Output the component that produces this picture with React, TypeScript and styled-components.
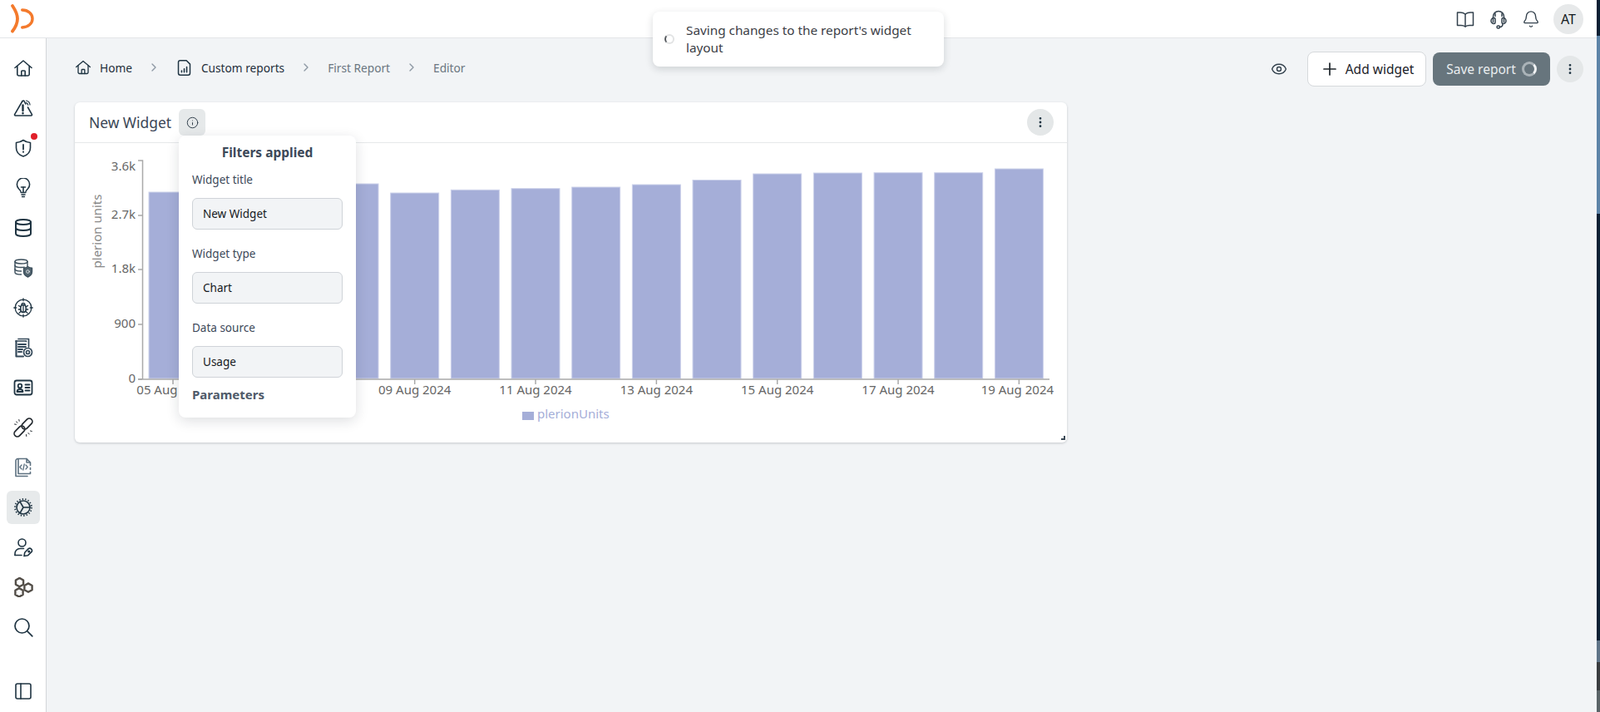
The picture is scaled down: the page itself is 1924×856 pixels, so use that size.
import { FC, ReactNode } from "react";
import styled, { createGlobalStyle } from "styled-components";
import {
  Bell,
  ChevronRight,
  Database,
  EllipsisVertical,
  Eye,
  Info,
  PanelLeft,
  Plus,
} from "lucide-react";

const GlobalStyle = createGlobalStyle`
  html, body {
    margin: 0;
    padding: 0;
    background: #f2f4f6;
    font-family: "Noto Sans", "Open Sans", sans-serif;
  }
  * { box-sizing: border-box; }
`;

const Svg: FC<{ children: ReactNode; color?: string; width?: number; size?: number }> = ({
  children,
  color = "#1f3442",
  width = 1.6,
  size = 24,
}) => (
  <svg
    width={size}
    height={size}
    viewBox="0 0 24 24"
    fill="none"
    stroke={color}
    strokeWidth={width}
    strokeLinecap="round"
    strokeLinejoin="round"
  >
    {children}
  </svg>
);

const HomeIcon: FC<{ size?: number }> = ({ size }) => (
  <Svg size={size}>
    <path d="M2 11.5 12 3l10 8.5" />
    <path d="M4.8 9.5v9.7a1.8 1.8 0 0 0 1.8 1.8h10.8a1.8 1.8 0 0 0 1.8-1.8V9.5" />
    <path d="M9.8 21v-5.2a.8.8 0 0 1 .8-.8h2.8a.8.8 0 0 1 .8.8V21" />
  </Svg>
);

const WarningIcon = () => (
  <Svg>
    <path d="M11 3.5 1.6 19.6A1 1 0 0 0 2.5 21h19a1 1 0 0 0 .9-1.4L17.5 11" />
    <path d="M11 3.5 12.8 3l2 4" />
    <path d="M11.5 8.5v6.5" strokeWidth={2.4} />
    <path d="M11.5 18v.2" strokeWidth={2.4} />
    <path d="M15.5 3a5.5 5.5 0 0 1 4.5 5" strokeWidth={1.2} />
    <path d="M15.5 5.6a3 3 0 0 1 2.2 2.6" strokeWidth={1.2} />
  </Svg>
);

const ShieldIcon = () => (
  <Svg>
    <path d="M12 2.5c2.5 1.8 5.2 2.8 8.5 3v6.2c0 5.2-3.6 8.6-8.5 10.3-4.9-1.700-8.500-5.100-8.500-10.300V5.500c3.300-.2 6-1.200 8.500-3Z" />
    <path d="M12 8v5.500" strokeWidth={1.8} />
    <path d="M12 16.600v.2" strokeWidth={2} />
  </Svg>
);

const BulbIcon = () => (
  <Svg>
    <path d="M9.200 17.500c0-2-1-3-2.600-4.500A7.600 7.600 0 1 1 17.400 13c-1.600 1.500-2.600 2.500-2.600 4.500Z" />
    <path d="M10 20h4" />
    <path d="M10.600 22.500h2.800" />
    <path d="M9.500 11h5" />
    <path d="M12 11v6" />
  </Svg>
);

const DataShieldIcon = () => (
  <Svg color="#3c4f5c" width={1.4}>
    <ellipse cx="9.500" cy="4.500" rx="7.500" ry="2.500" />
    <path d="M2 4.500v13c0 1.400 3.400 2.500 7.500 2.500" />
    <path d="M17 4.500v6" />
    <path d="M2 9c0 1.400 3.400 2.500 7.500 2.500 1.400 0 2.700-.1 3.800-.4" />
    <path d="M2 13.500c0 1.400 3.400 2.500 7.500 2.500" />
    <path
      d="M17.500 10.500c1.500 1 3 1.600 5 1.700v4.300c0 3.200-2 5.200-5 6.500-3-1.300-5-3.300-5-6.500v-4.300c2-.1 3.500-.7 5-1.700Z"
      fill="#52646f"
    />
    <circle cx="17.500" cy="16.500" r="1.800" stroke="#e4e8ea" strokeWidth={1} />
  </Svg>
);

const BugIcon = () => (
  <Svg width={1.3}>
    <circle cx="12" cy="12" r="9.800" />
    <path d="M12 .8v3M12 20.200v3M.8 12h3M20.200 12h3" />
    <rect x="8.800" y="8.500" width="6.400" height="9" rx="3.200" strokeWidth={1.500} />
    <path d="M10 8.500a2 2 0 0 1 4 0M12 9v8.500" />
    <path d="M8.800 11 6.500 9.500M15.200 11l2.300-1.500M8.800 14H6.300M15.200 14h2.500M9 16.500l-2 1.800M15 16.500l2 1.800" />
  </Svg>
);

const ReportIcon = () => (
  <Svg color="#34495a" width={1.7}>
    <path d="M6 1.500h12.500v9.500" />
    <path d="M3 4h12.500v.5" />
    <path d="M3.500 4v18.500h8.500" strokeWidth={2.200} />
    <path d="M6 8h9M6 11h9M6 14h5M6 17h4" strokeWidth={2} />
    <circle cx="17.500" cy="17.500" r="5" />
    <circle cx="17.500" cy="17.500" r="2" />
  </Svg>
);

const ContactIcon = () => (
  <Svg width={1.800}>
    <rect x="1.500" y="3.500" width="21" height="17" rx="2.500" />
    <circle cx="8" cy="10" r="2.300" />
    <path d="M4.500 17c0-2 1.500-3 3.500-3s3.500 1 3.500 3Z" />
    <path d="M14.500 8.500h5M14.500 12h5M14.500 15.500h5" />
  </Svg>
);

const ChainIcon = () => (
  <Svg color="#22282e" width={1.700}>
    <rect x="12.750" y="0" width="7.500" height="15" rx="3.700" transform="rotate(45 16.500 7.500)" />
    <rect x="3.750" y="9" width="7.500" height="15" rx="3.700" transform="rotate(45 7.500 16.500)" />
    <path d="M3.500 5 5 6.200M6.800 2.500l.4 1.800M1.500 8l2 .3M18 18.500l1.200 1.500M20.500 16l1.800.5M15.500 20.500l.3 2" strokeWidth={1} />
  </Svg>
);

const CodeDocIcon = () => (
  <Svg color="#5d7180" width={1.600}>
    <path d="M16 1.500H5.500a2.500 2.500 0 0 0-2.500 2.500v18.500h14" />
    <path d="M6 2v17.500h14.500M20.500 19.500v-2M20.500 14.500v-2M20.500 9.500V6L16 1.500V6h4.500" />
    <path d="m10 9-2.200 2.500L10 14M15 9l2.200 2.500L15 14M13.200 8l-1.400 7" strokeWidth={1.300} />
  </Svg>
);

const CogIcon = () => (
  <Svg width={1.600}>
    <circle cx="12" cy="12" r="10" strokeWidth={1.800} strokeDasharray="1.400 2.100" strokeLinecap="butt" />
    <circle cx="12" cy="12" r="8" />
    <path d="M12 12h8M12 12 8 5.200M12 12l-4 6.800" />
  </Svg>
);

const UserKeyIcon = () => (
  <Svg>
    <circle cx="10.500" cy="6.500" r="4.500" />
    <path d="M2 21.500v-2a6 6 0 0 1 6-6h4.500" />
    <path d="M2 21.500h8" />
    <path d="m13 22.500.8-4.300 4.200-4.300a2.700 2.700 0 0 1 3.800 3.800l-4.400 4.100Z" />
    <circle cx="18.800" cy="17" r=".8" />
  </Svg>
);

const HexIcon = () => (
  <Svg color="#524d47" width={2.400}>
    <path d="M7.500.9 12.100 3.500v5.200L7.500 11.300 2.900 8.700V3.500Z" />
    <path d="M18 7.400 22.600 10v5.200L18 17.800l-4.600-2.600V10Z" />
    <path d="M7 13.100 11.600 15.700v5.200L7 23.500l-4.600-2.600v-5.200Z" />
  </Svg>
);

const LensIcon = () => (
  <Svg width={1.700}>
    <circle cx="10.500" cy="10.500" r="8.500" />
    <path d="m16.800 16.800 6 6" />
  </Svg>
);

const BookIcon = () => (
  <Svg color="#33414d" width={1.500}>
    <path d="M12 6c-1.500-1.200-3.500-2-6-2H2.500v15.500H7c2 0 3.600.4 5 1.500 1.400-1.100 3-1.500 5-1.500h4.500V4H18c-2.500 0-4.500.8-6 2Z" />
    <path d="M12 6v15" />
  </Svg>
);

const HeadsetIcon = () => (
  <Svg color="#33414d" width={1.500}>
    <path d="M5.500 15.500V9a6.500 6.500 0 0 1 13 0v6.500" />
    <path d="M8 16a1.500 1.500 0 0 1-1.500 1.500A3.500 3.500 0 0 1 6.500 10.500 1.500 1.500 0 0 1 8 12Z" />
    <path d="M16 16a1.500 1.500 0 0 0 1.500 1.500 3.500 3.500 0 0 0 0-7A1.500 1.500 0 0 0 16 12Z" />
    <path d="M8 5.500V8.500M16 5.500V8.500" />
    <path d="M17 17.500c0 2.500-1.500 4-3.500 4" />
    <rect x="10" y="20" width="3.500" height="3" rx="1.500" />
  </Svg>
);

const ReportFileIcon = () => (
  <Svg width={1.700} size={21}>
    <path d="M15 2H6.500A2.500 2.500 0 0 0 4 4.500v15A2.500 2.500 0 0 0 6.500 22h11a2.500 2.500 0 0 0 2.500-2.500V7Z" />
    <path d="M8.500 18v-2M12 18v-4.500M15.500 18v-7" strokeWidth={1.800} />
  </Svg>
);

const navItems = [
  { icon: <HomeIcon /> },
  { icon: <WarningIcon /> },
  { icon: <ShieldIcon />, alert: true },
  { icon: <BulbIcon /> },
  { icon: <Database size={24} color="#1f3442" strokeWidth={2} /> },
  { icon: <DataShieldIcon /> },
  { icon: <BugIcon /> },
  { icon: <ReportIcon /> },
  { icon: <ContactIcon /> },
  { icon: <ChainIcon /> },
  { icon: <CodeDocIcon /> },
  { icon: <CogIcon />, active: true },
  { icon: <UserKeyIcon /> },
  { icon: <HexIcon /> },
  { icon: <LensIcon /> },
];

// usage per day, y is the pixel top of the bar inside the chart svg
const barTops = [59, 56, 53, 49, 60, 56.3, 54.7, 53, 50, 44.5, 37, 36, 35.7, 35.7, 31];
const yTicks = [
  { label: "2.7k", y: 87 },
  { label: "1.8k", y: 152 },
  { label: "900", y: 218 },
  { label: "0", y: 284 },
];
const BAR_START = 89;
const BAR_PITCH = 72.67;
const BAR_WIDTH = 58;
const BASELINE = 284;

const WidgetChart = () => (
  <ChartSvg width={1192} height={359}>
    <AxisTitle transform="translate(28 106) rotate(-90)" textAnchor="middle" dominantBaseline="middle">
      plerion units
    </AxisTitle>
    {barTops.map((top, i) => (
      <Bar key={i} x={BAR_START + i * BAR_PITCH} y={top} width={BAR_WIDTH} height={BASELINE - top - 1} />
    ))}
    <AxisLine d={`M76 21H81.500V${BASELINE}M76 ${BASELINE}H1172`} />
    <TickLabel x={73} y={29} textAnchor="end" dominantBaseline="middle">
      3.6k
    </TickLabel>
    {yTicks.map((t) => (
      <g key={t.label}>
        <AxisLine d={`M76 ${t.y}H81`} />
        <TickLabel x={73} y={t.y} textAnchor="end" dominantBaseline="middle">
          {t.label}
        </TickLabel>
      </g>
    ))}
    {barTops.map((_, i) => {
      if (i % 2 !== 0) return null;
      const cx = BAR_START + i * BAR_PITCH + BAR_WIDTH / 2;
      const day = String(5 + i).padStart(2, "0");
      return (
        <g key={i}>
          <AxisLine d={`M${cx} ${BASELINE}v6`} />
          <TickLabel x={i === 14 ? cx - 2 : cx} y={298} textAnchor="middle" dominantBaseline="middle">
            {`${day} Aug 2024`}
          </TickLabel>
        </g>
      );
    })}
    <LegendSwatch x={538} y={323} width={14} height={10} />
    <LegendText x={556} y={327} dominantBaseline="middle">
      plerionUnits
    </LegendText>
  </ChartSvg>
);

const fields = [
  { label: "Widget title", value: "New Widget" },
  { label: "Widget type", value: "Chart" },
  { label: "Data source", value: "Usage" },
];

const App = () => (
  <Shell>
    <GlobalStyle />
    <Frame>
      <TopBar>
        <svg width="30" height="36" viewBox="0 0 30 36" fill="none" stroke="#f47a2c" strokeLinecap="round">
          <path d="M2 2C6 8 8 13 8 17.500c0 5-2.500 10.500-6 15" strokeWidth={3.800} />
          <path d="M13.700 7c7 0 12.300 4.500 12.300 10.500S21 27.500 13.700 28" strokeWidth={3.400} />
        </svg>
        <TopActions>
          <BookIcon />
          <HeadsetIcon />
          <Bell size={22} color="#33414d" strokeWidth={1.500} />
          <Avatar>AT</Avatar>
        </TopActions>
      </TopBar>
      <Body>
        <Sidebar>
          {navItems.map((item, i) => (
            <NavButton key={i} $active={item.active}>
              {item.icon}
              {item.alert && <AlertDot />}
            </NavButton>
          ))}
          <CollapseButton>
            <PanelLeft size={24} color="#1f3442" strokeWidth={1.600} />
          </CollapseButton>
        </Sidebar>
        <Content>
          <Toolbar>
            <Breadcrumbs>
              <Crumb $strong>
                <HomeIcon size={20} />
                <span>Home</span>
              </Crumb>
              <ChevronRight size={16} color="#8d98a3" />
              <Crumb $strong>
                <ReportFileIcon />
                <span>Custom reports</span>
              </Crumb>
              <ChevronRight size={16} color="#8d98a3" />
              <Crumb>First Report</Crumb>
              <ChevronRight size={16} color="#8d98a3" />
              <Crumb>Editor</Crumb>
            </Breadcrumbs>
            <Actions>
              <PreviewButton>
                <Eye size={20} color="#33414d" strokeWidth={1.700} />
              </PreviewButton>
              <AddButton>
                <Plus size={24} color="#1c2329" strokeWidth={1.700} />
                Add widget
              </AddButton>
              <SaveButton>
                Save report
                <SaveSpinner />
              </SaveButton>
              <RoundButton>
                <EllipsisVertical size={16} color="#1f3442" strokeWidth={2.200} />
              </RoundButton>
            </Actions>
          </Toolbar>
          <Card>
            <CardHeader>
              <CardTitle>New Widget</CardTitle>
              <InfoWrap>
                <InfoButton>
                  <Info size={15} color="#33414d" strokeWidth={1.600} />
                </InfoButton>
                <Popover>
                  <PopoverTitle>Filters applied</PopoverTitle>
                  {fields.map((f) => (
                    <Field key={f.label}>
                      <FieldLabel>{f.label}</FieldLabel>
                      <FieldInput readOnly value={f.value} />
                    </Field>
                  ))}
                  <ParamsTitle>Parameters</ParamsTitle>
                </Popover>
              </InfoWrap>
              <RoundButton>
                <EllipsisVertical size={16} color="#1f3442" strokeWidth={2.200} />
              </RoundButton>
            </CardHeader>
            <WidgetChart />
            <ResizeHandle />
          </Card>
        </Content>
      </Body>
      <Toast>
        <ToastSpinner />
        <span>Saving changes to the report's widget layout</span>
      </Toast>
    </Frame>
    <WindowEdge />
  </Shell>
);

export default App;

const Shell = styled.div`
  display: flex;
  width: 1924px;
  height: 856px;
  overflow: hidden;
`;

const Frame = styled.div`
  position: relative;
  flex: 1;
  display: flex;
  flex-direction: column;
  min-width: 0;
`;

const WindowEdge = styled.div`
  width: 4px;
  background: linear-gradient(
    #0c2034 0 5%,
    #5d84a8 5% 30%,
    #0c2034 30% 90%,
    #5f7488 90% 93%,
    #3a3d40 93% 97%,
    #5b6468 97%
  );
`;

const TopBar = styled.header`
  height: 46px;
  flex-shrink: 0;
  display: flex;
  align-items: center;
  justify-content: space-between;
  padding: 0 16px 0 13px;
  background: #fff;
  border-bottom: 1px solid #e3e5e8;
`;

const TopActions = styled.div`
  display: flex;
  align-items: center;
  gap: 16px;
`;

const Avatar = styled.div`
  width: 36px;
  height: 36px;
  border-radius: 50%;
  background: #e7e9ea;
  color: #14191d;
  font-size: 16px;
  display: flex;
  align-items: center;
  justify-content: center;
`;

const Body = styled.div`
  flex: 1;
  display: flex;
  min-height: 0;
`;

const Sidebar = styled.nav`
  width: 56px;
  flex-shrink: 0;
  display: flex;
  flex-direction: column;
  align-items: center;
  gap: 8px;
  padding: 16px 0 5px;
  background: #fff;
  border-right: 1px solid #d3d6d9;
`;

const NavButton = styled.div<{ $active?: boolean }>`
  position: relative;
  width: 40px;
  height: 40px;
  flex-shrink: 0;
  display: flex;
  align-items: center;
  justify-content: center;
  border-radius: 6px;
  background: ${({ $active }) => ($active ? "#e7eaeb" : "transparent")};
`;

const CollapseButton = styled(NavButton)`
  margin-top: auto;
`;

const AlertDot = styled.span`
  position: absolute;
  top: 2px;
  right: 3px;
  width: 8px;
  height: 8px;
  border-radius: 50%;
  background: #e0202a;
  box-shadow: 0 0 0 2px #fff;
`;

const Content = styled.main`
  flex: 1;
  min-width: 0;
  padding: 16px 16px 0 34px;
  background: #f2f4f6;
`;

const Toolbar = styled.div`
  display: flex;
  align-items: center;
  justify-content: space-between;
  height: 42px;
`;

const Breadcrumbs = styled.div`
  display: flex;
  align-items: center;
  gap: 18px;
  margin-top: -4px;
`;

const Crumb = styled.div<{ $strong?: boolean }>`
  display: flex;
  align-items: center;
  gap: 10px;
  font-size: 13.7px;
  color: ${({ $strong }) => ($strong ? "#1f2e3a" : "#6b7680")};
`;

const Actions = styled.div`
  display: flex;
  align-items: center;
  gap: 8px;
`;

const PreviewButton = styled.div`
  display: flex;
  margin-right: 16px;
`;

const AddButton = styled.button`
  height: 42px;
  width: 143px;
  display: flex;
  align-items: center;
  justify-content: center;
  gap: 7px;
  background: #fff;
  border: 1px solid #d6d9dc;
  border-radius: 8px;
  font: inherit;
  font-size: 15.500px;
  color: #1c2329;
`;

const SaveButton = styled.button`
  height: 40px;
  width: 141px;
  display: flex;
  align-items: center;
  justify-content: center;
  gap: 7px;
  background: #67757d;
  border: none;
  border-radius: 8px;
  font: inherit;
  font-size: 15.500px;
  color: #e9edef;
`;

const SaveSpinner = styled.span`
  width: 18px;
  height: 18px;
  border-radius: 50%;
  border: 3.500px solid #aab3b8;
  border-right-color: #f2f4f5;
`;

const RoundButton = styled.div`
  width: 32px;
  height: 32px;
  border-radius: 50%;
  background: #e4e7e8;
  display: flex;
  align-items: center;
  justify-content: center;
`;

const Card = styled.section`
  position: relative;
  width: 1193px;
  height: 409px;
  margin-top: 19px;
  background: #fff;
  border-radius: 6px;
  box-shadow: 0 1px 3px rgba(20, 30, 40, 0.2);
`;

const CardHeader = styled.div`
  height: 49px;
  display: flex;
  align-items: center;
  padding: 0 16px 0 17px;
  border-bottom: 1px solid #e6e8ea;
`;

const CardTitle = styled.h2`
  margin: 0;
  font-size: 17.400px;
  font-weight: 400;
  color: #3a4656;
`;

const InfoWrap = styled.div`
  position: relative;
  margin: 0 auto 0 9px;
`;

const InfoButton = styled.div`
  width: 32px;
  height: 32px;
  border-radius: 6px;
  background: #e6e9ea;
  display: flex;
  align-items: center;
  justify-content: center;
`;

const Popover = styled.div`
  position: absolute;
  z-index: 5;
  top: 32px;
  left: 0;
  width: 213px;
  height: 339px;
  padding: 10px 16px 0;
  background: #fff;
  border-radius: 8px;
  box-shadow: 0 4px 16px rgba(20, 30, 40, 0.14);
`;

const PopoverTitle = styled.div`
  font-size: 15.500px;
  font-weight: 700;
  line-height: 20px;
  text-align: center;
  color: #3d4959;
`;

const Field = styled.div`
  display: flex;
  flex-direction: column;
  gap: 13px;
  margin-top: 14px;
  & + & {
    margin-top: 20px;
  }
`;

const FieldLabel = styled.label`
  font-size: 13.500px;
  line-height: 18px;
  color: #3d4959;
`;

const FieldInput = styled.input`
  width: 181px;
  height: 38px;
  padding: 0 12px;
  background: #f2f4f6;
  border: 1px solid #cfd3d8;
  border-radius: 6px;
  font: inherit;
  font-size: 13.500px;
  color: #15191d;
  outline: none;
`;

const ParamsTitle = styled.div`
  margin-top: 10px;
  font-size: 15px;
  font-weight: 700;
  line-height: 20px;
  color: #4f5a69;
`;

const ChartSvg = styled.svg`
  display: block;
`;

const Bar = styled.rect`
  fill: #a5aed8;
  stroke: #ccd1ea;
  stroke-width: 1px;
`;

const AxisLine = styled.path`
  fill: none;
  stroke: #a9a9a9;
  stroke-width: 1.500px;
`;

const TickLabel = styled.text`
  font-size: 15px;
  fill: #666;
`;

const AxisTitle = styled.text`
  font-size: 15px;
  fill: #888;
`;

const LegendSwatch = styled.rect`
  fill: #a5aed8;
`;

const LegendText = styled.text`
  font-size: 15px;
  fill: #a5aed8;
`;

const ResizeHandle = styled.span`
  position: absolute;
  right: 2px;
  bottom: 3px;
  width: 5px;
  height: 5px;
  border-right: 2px solid #3c4a56;
  border-bottom: 2px solid #3c4a56;
`;

const Toast = styled.div`
  position: absolute;
  z-index: 10;
  top: 14px;
  left: 785px;
  width: 350px;
  height: 66px;
  display: flex;
  align-items: center;
  gap: 14px;
  padding: 0 16px 0 14px;
  background: #fff;
  border-radius: 8px;
  box-shadow: 0 3px 10px rgba(20, 30, 40, 0.16);
  font-size: 15.300px;
  line-height: 21px;
  color: #3c4046;
`;

const ToastSpinner = styled.span`
  width: 12px;
  height: 12px;
  flex-shrink: 0;
  border-radius: 50%;
  border: 2px solid #e2e3e4;
  border-left-color: #55595e;
`;
